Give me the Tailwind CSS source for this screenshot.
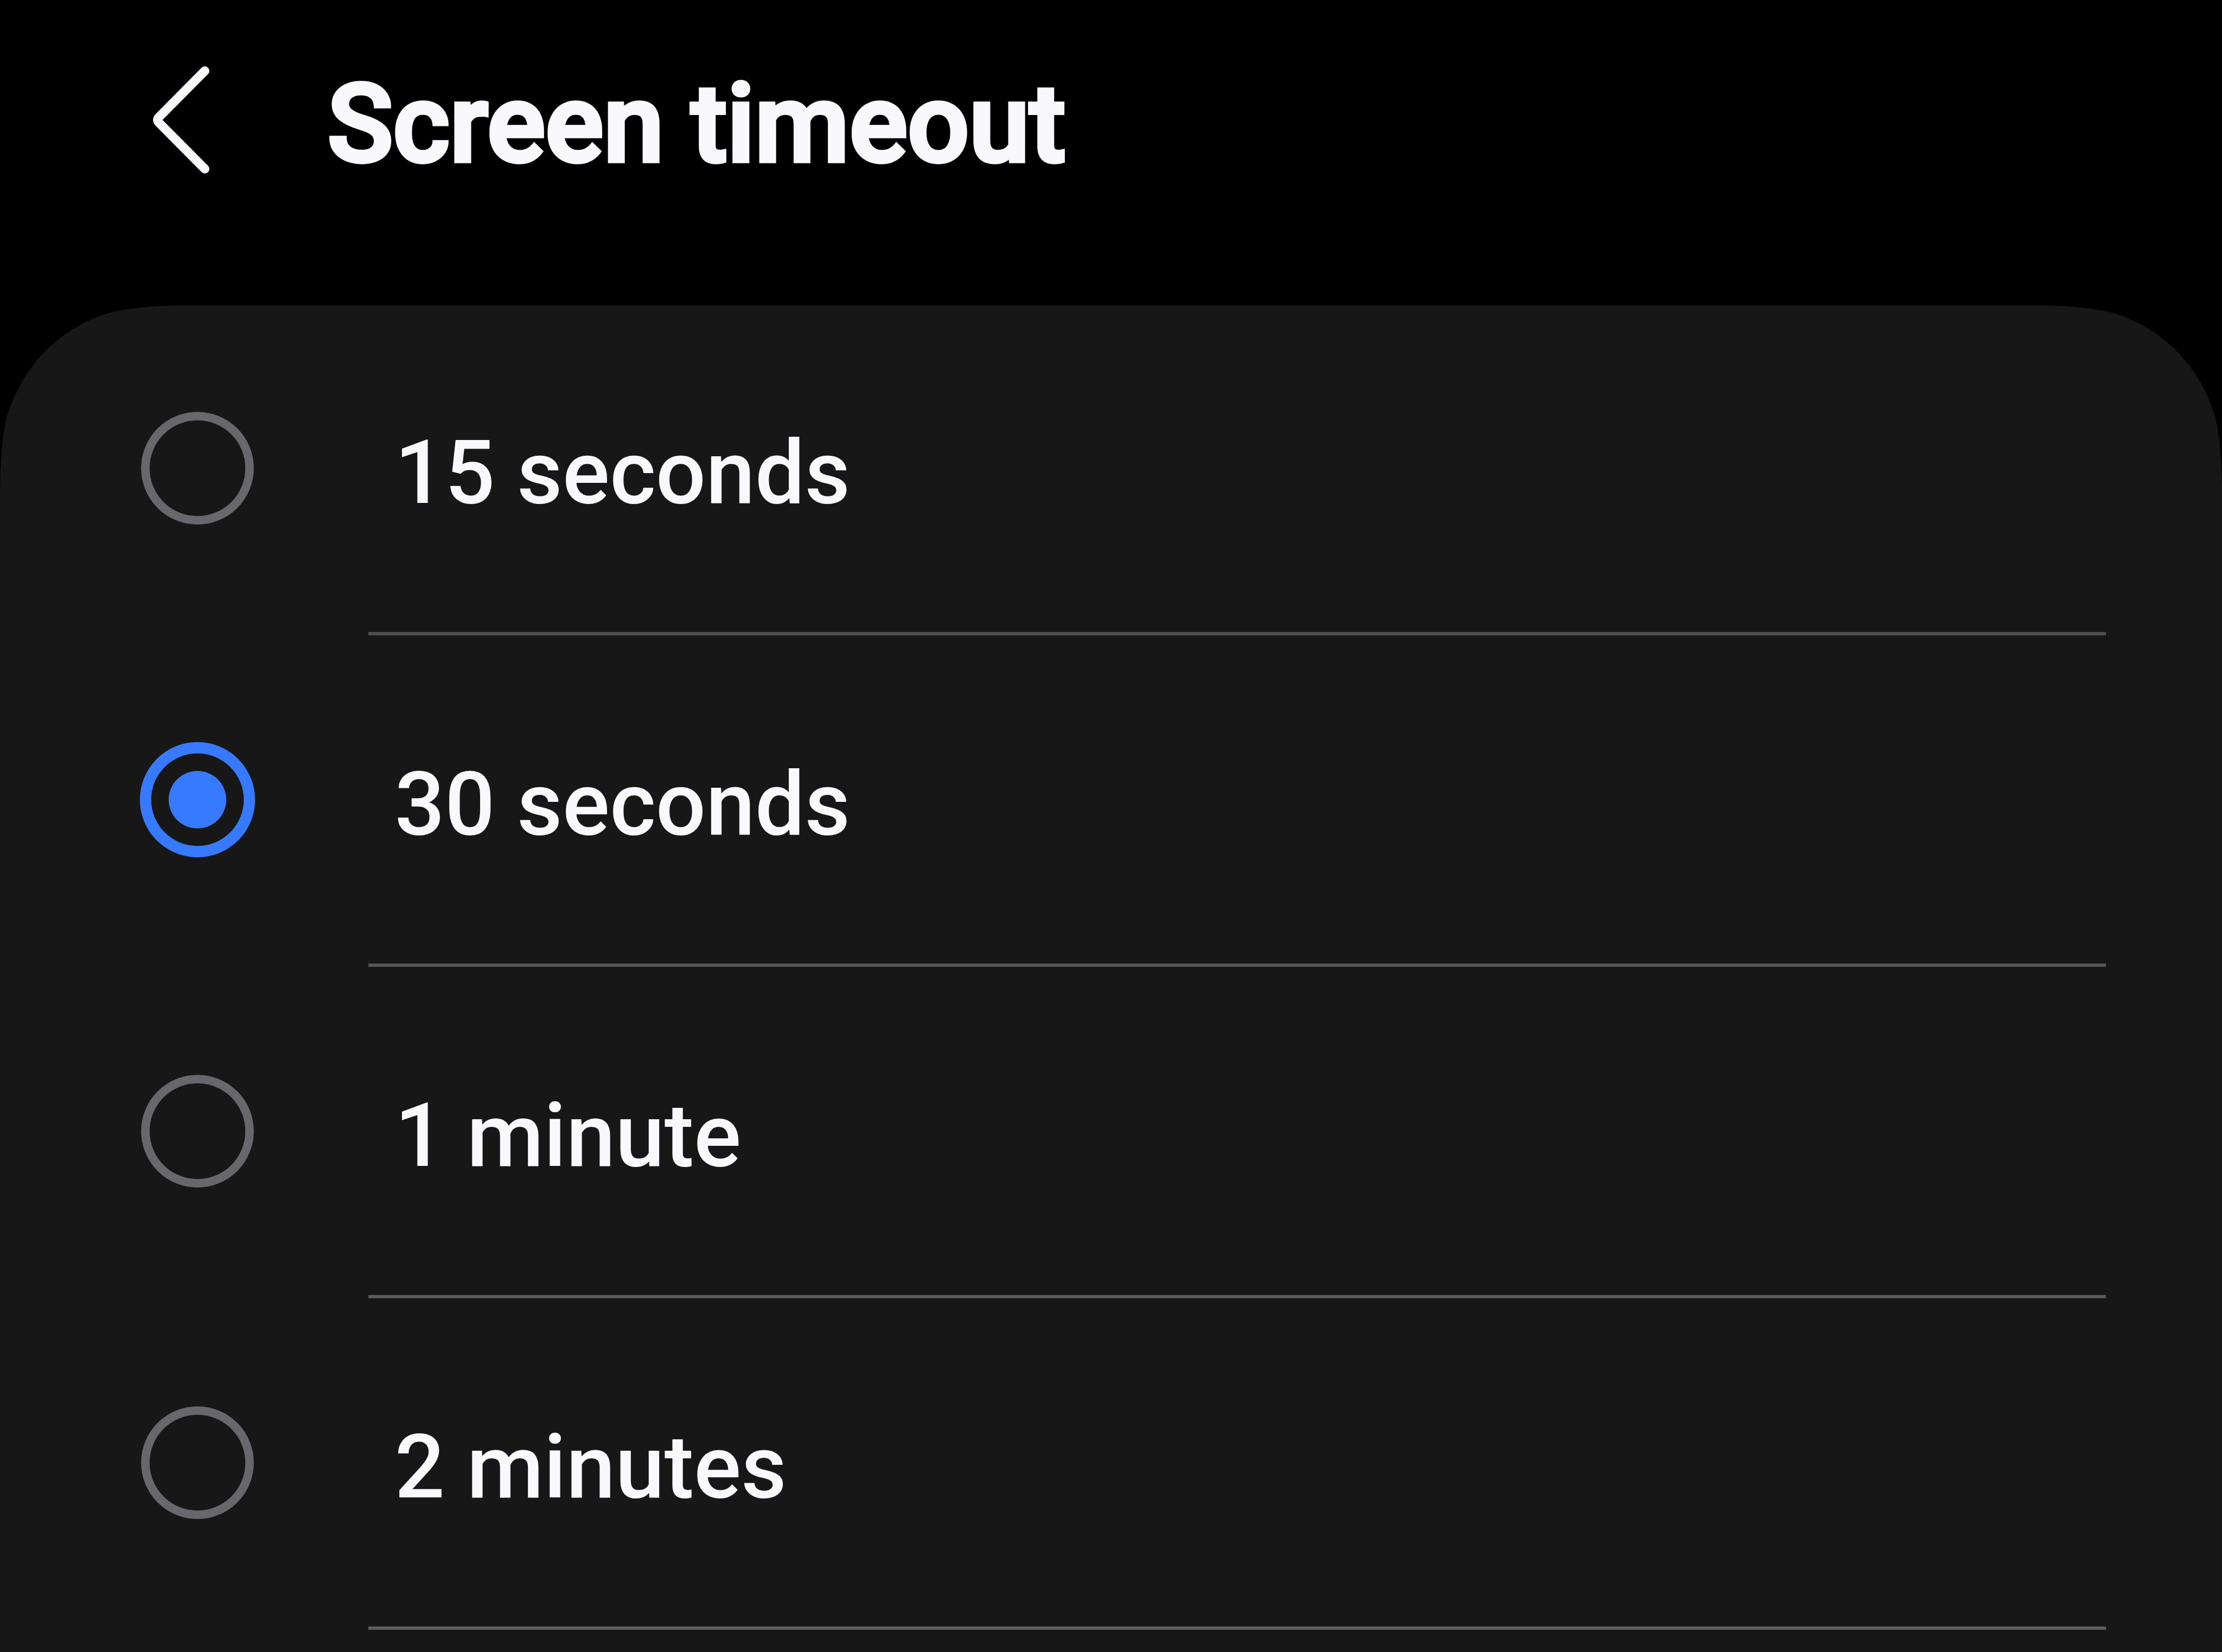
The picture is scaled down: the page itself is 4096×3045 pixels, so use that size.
<!DOCTYPE html>
<html lang="en">
<head>
<meta charset="utf-8">
<title>Screen timeout</title>
<script src="https://cdn.jsdelivr.net/npm/@tailwindcss/browser@4"></script>
</head>
<body class="bg-black">
<div class="relative flex h-[3045px] w-[4096px] flex-col overflow-hidden bg-black font-['Roboto',sans-serif] text-[#f9f8fd]">
  <header class="flex h-[560px] shrink-0 items-start pl-[275px] pt-[117px]">
    <svg class="h-[209px] w-[114px] shrink-0" viewBox="290 123.4 120.2 220.4" fill="none" stroke="#f9f8fc" stroke-width="17.6" stroke-linecap="round" stroke-linejoin="round" aria-label="Back">
      <path d="M398.2 137.8L309 227.6Q303.6 233.1 309 238.6L398.2 328.4"/>
    </svg>
    <h1 class="ml-[214.4px] mt-[12px] whitespace-nowrap text-[200.2px] font-medium leading-[200px] [-webkit-text-stroke:7.4px_#f9f8fd]">Screen timeout</h1>
  </header>

  <main class="relative flex-1">
    <!-- Card surface with continuous-curvature top corners -->
    <svg class="absolute left-0 top-0 h-[2485px] w-[4096px]" viewBox="0 590.6 4320 2621" preserveAspectRatio="none" fill="#171717">
      <path d="M0 975C0 905 4 842 14 808C45 708 120 634 217 607C262 597 310 593.5 375 593.5H3945C4010 593.5 4058 597 4103 607C4200 634 4275 708 4306 808C4316 842 4320 905 4320 975V3212H0Z"/>
    </svg>

    <ul class="relative">
      <li class="flex h-[611.07px]">
        <div class="flex w-[679px] shrink-0 items-center pb-[6px] pl-[250px]">
          <svg class="size-[228px]" viewBox="-120.25 -120.25 240.5 240.5" fill="none"><circle r="101.3" stroke="#68676c" stroke-width="16.5"/></svg>
        </div>
        <div class="flex w-[3203px] items-center border-b-[6px] border-[#4e4e4e] pl-[48.4px] pt-[18px] text-[162.8px] font-medium leading-[192px]">15 seconds</div>
      </li>
      <li class="flex h-[611.07px]">
        <div class="flex w-[679px] shrink-0 items-center pb-[6px] pl-[250px]">
          <svg class="size-[228px]" viewBox="-120.25 -120.25 240.5 240.5" fill="none"><circle r="101" stroke="#387aff" stroke-width="22"/><circle r="56" fill="#387aff"/></svg>
        </div>
        <div class="flex w-[3203px] items-center border-b-[6px] border-[#565656] pl-[48.4px] pt-[18px] text-[162.8px] font-medium leading-[192px]">30 seconds</div>
      </li>
      <li class="flex h-[611.07px]">
        <div class="flex w-[679px] shrink-0 items-center pb-[6px] pl-[250px]">
          <svg class="size-[228px]" viewBox="-120.25 -120.25 240.5 240.5" fill="none"><circle r="101.3" stroke="#68676c" stroke-width="16.5"/></svg>
        </div>
        <div class="flex w-[3203px] items-center border-b-[6px] border-[#5a5a5a] pl-[48.4px] pt-[18px] text-[162.8px] font-medium leading-[192px]">1 minute</div>
      </li>
      <li class="flex h-[611.07px]">
        <div class="flex w-[679px] shrink-0 items-center pb-[6px] pl-[250px]">
          <svg class="size-[228px]" viewBox="-120.25 -120.25 240.5 240.5" fill="none"><circle r="101.3" stroke="#68676c" stroke-width="16.5"/></svg>
        </div>
        <div class="flex w-[3203px] items-center border-b-[6px] border-[#5e5e5e] pl-[48.4px] pt-[18px] text-[162.8px] font-medium leading-[192px]">2 minutes</div>
      </li>
    </ul>
  </main>
  <div class="h-px shrink-0 bg-[#0c040a]"></div>
</div>
</body>
</html>
